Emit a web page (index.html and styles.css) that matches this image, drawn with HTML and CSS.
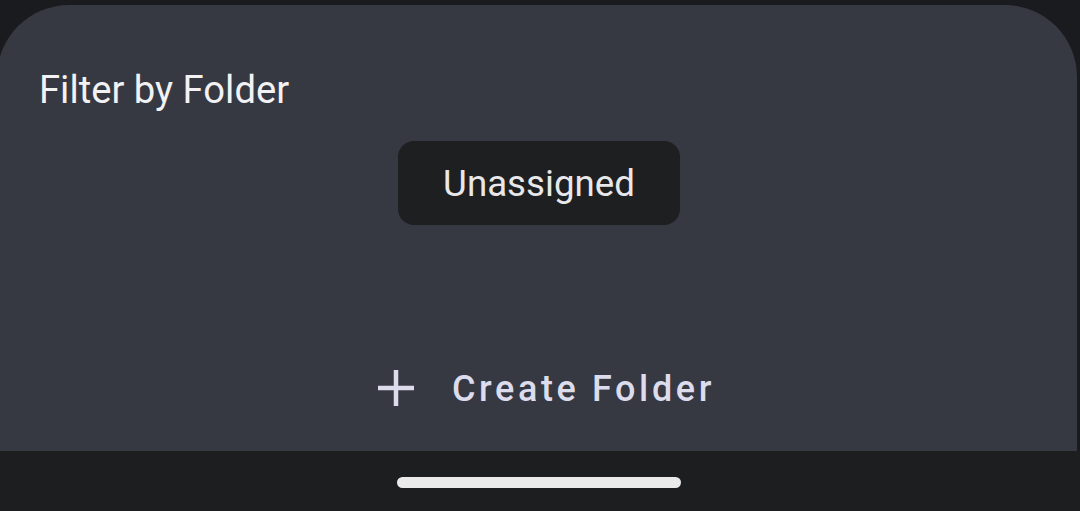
FILE: index.html
```html
<!DOCTYPE html>
<html lang="en">
<head>
  <meta charset="UTF-8" />
  <meta name="viewport" content="width=device-width, initial-scale=1.0"/>
  <title>Filter by Folder</title>
  <link rel="stylesheet" href="styles.css">
</head>
<body>
  <div class="screen">
    <div class="sheet">
      <h2 class="sheet-title">Filter by Folder</h2>

      <div class="chips">
        <button class="chip">Unassigned</button>
      </div>

      <button class="create-btn">
        <svg class="plus" width="38" height="38" viewBox="0 0 38 38">
          <path d="M19 1v36M1 19h36" stroke="currentColor" stroke-width="4.5" fill="none"/>
        </svg>
        <span>Create Folder</span>
      </button>
    </div>

    <div class="nav-bar">
      <div class="handle"></div>
    </div>
  </div>
</body>
</html>
```

FILE: styles.css
```css
body {
  margin: 0;
  background: #1a1b1f;
  font-family: Roboto, 'Noto Sans', sans-serif;
  overflow: hidden;
}

.screen {
  height: 511px;
  display: flex;
  flex-direction: column;
  padding-top: 5px;
  box-sizing: border-box;
}

.sheet {
  flex: 1;
  background: #363842;
  border-radius: 72px 72px 0 0;
  margin: 0 3px 0 -3px;
  display: flex;
  flex-direction: column;
  align-items: center;
}

.sheet-title {
  align-self: flex-start;
  margin: 63px 0 0 42px;
  font-size: 38.2px;
  font-weight: 400;
  line-height: 44px;
  color: #f2f2f4;
}

.chips {
  margin-top: 29px;
  display: flex;
  justify-content: center;
  gap: 12px;
}

.chip {
  background: #1e1f21;
  color: #e8e8ea;
  border: none;
  border-radius: 16px;
  height: 84px;
  padding: 0 45px;
  font-family: inherit;
  font-size: 36.7px;
  cursor: pointer;
  margin-left: 4px;
}

.create-btn {
  margin-top: 143px;
  margin-left: 18px;
  display: flex;
  align-items: center;
  gap: 37px;
  background: none;
  border: none;
  color: #dcdcec;
  font-family: inherit;
  font-size: 36px;
  font-weight: 500;
  letter-spacing: 3.6px;
  cursor: pointer;
  padding: 0;
}

.plus {
  display: block;
  margin-top: -2px;
}

.nav-bar {
  height: 60px;
  background: #1d1e20;
  display: flex;
  justify-content: center;
  align-items: center;
}

.handle {
  width: 284px;
  height: 11px;
  border-radius: 6px;
  background: #eaeaea;
  margin-left: -2px;
  margin-top: 2px;
}
```
